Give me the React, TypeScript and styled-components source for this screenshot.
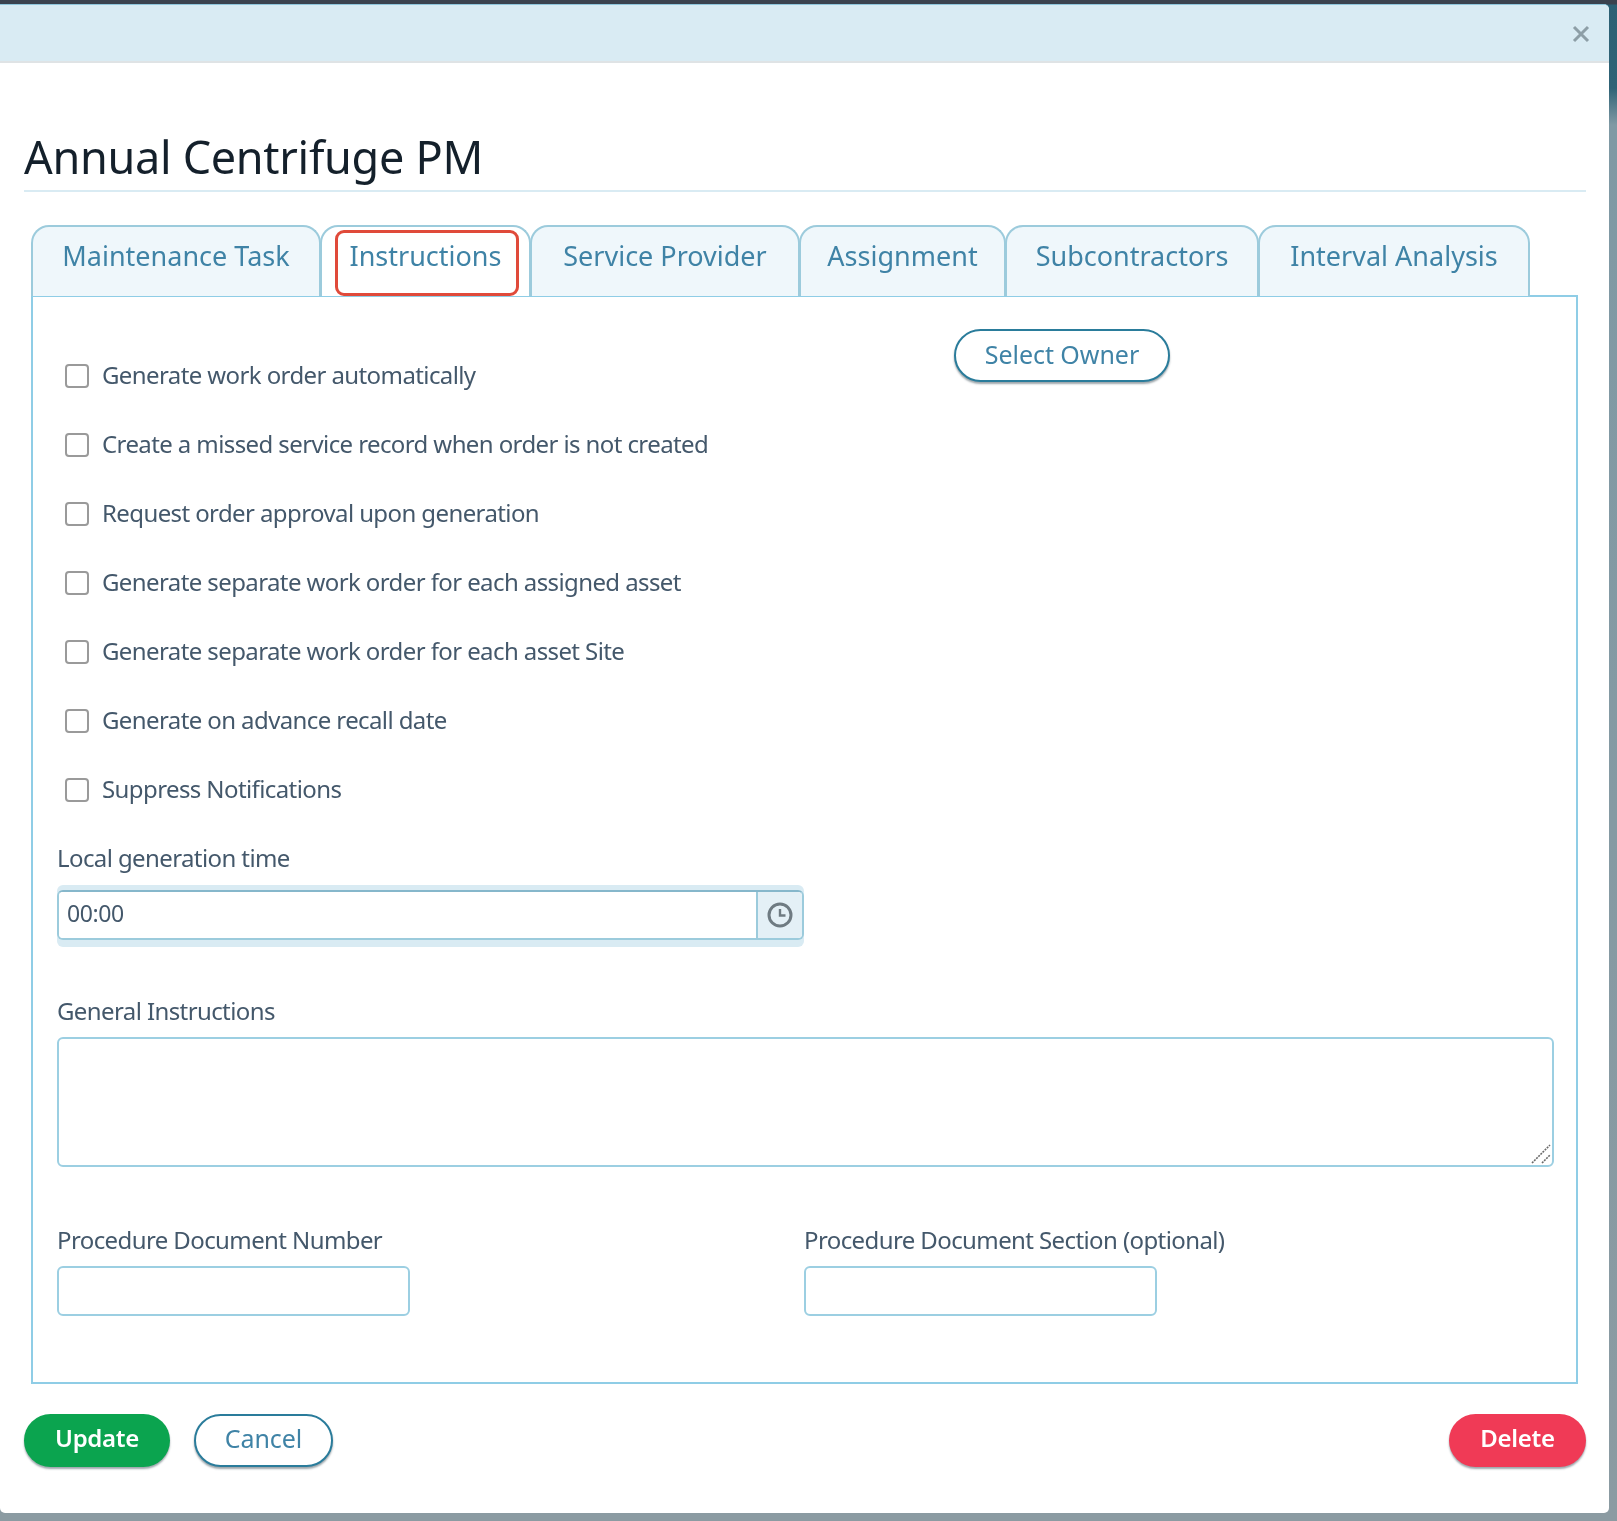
import styled, { createGlobalStyle } from "styled-components";

const GlobalStyle = createGlobalStyle`
  html, body {
    margin: 0;
    padding: 0;
  }
  body {
    width: 1617px;
    height: 1521px;
    overflow: hidden;
    font-family: "Noto Sans", "Open Sans", sans-serif;
    background: linear-gradient(180deg, #3b424e 0, #3b424e 4px, #2c6074 5px, #2f6376 88px, #7f99a4 125px, #8b9ba2 100%);
  }
`;

const tabs = [
  { label: "Maintenance Task", width: 290 },
  { label: "Instructions", width: 211, active: true },
  { label: "Service Provider", width: 270 },
  { label: "Assignment", width: 207 },
  { label: "Subcontractors", width: 254 },
  { label: "Interval Analysis", width: 272 },
];

const options = [
  "Generate work order automatically",
  "Create a missed service record when order is not created",
  "Request order approval upon generation",
  "Generate separate work order for each assigned asset",
  "Generate separate work order for each asset Site",
  "Generate on advance recall date",
  "Suppress Notifications",
];

const Modal = styled.div`
  width: 1609px;
  height: 1509px;
  margin-top: 4px;
  background: #fff;
  border-top: 1px solid #8fc6dc;
  border-radius: 0 5px 5px 5px;
  box-sizing: border-box;
  filter: blur(0.4px);
`;

const Header = styled.div`
  height: 58px;
  box-sizing: border-box;
  display: flex;
  align-items: center;
  justify-content: flex-end;
  padding: 2px 19px 0 0;
  background: #d9ebf3;
  border-bottom: 2px solid #dfe3e5;
  border-radius: 0 5px 0 0;
`;

const CloseIcon = styled.svg`
  width: 18px;
  height: 18px;
  stroke: #8d9ea6;
  stroke-width: 3;
  fill: none;
`;

const Body = styled.div`
  padding: 71px 23px 0 24px;
`;

const Title = styled.h1`
  margin: 0;
  height: 56px;
  font-size: 45px;
  line-height: 46px;
  font-weight: 400;
  color: #14202b;
  letter-spacing: -0.3px;
  border-bottom: 2px solid #d9ebf3;
`;

const TabBar = styled.div`
  display: flex;
  margin: 33px 0 0 7px;
  position: relative;
`;

const Tab = styled.div<{ $width: number; $active?: boolean }>`
  width: ${(p) => p.$width}px;
  height: 71px;
  box-sizing: border-box;
  flex: none;
  display: flex;
  justify-content: center;
  padding-top: 11px;
  font-size: 27px;
  line-height: 36px;
  letter-spacing: 0;
  color: #3f83a6;
  background: ${(p) => (p.$active ? "#fff" : "#eff7fb")};
  border: 2px solid #9ccbdc;
  border-bottom: none;
  border-radius: 18px 18px 0 0;
  margin-right: -1px;
`;

const Highlight = styled.div`
  position: absolute;
  left: 304px;
  top: 5px;
  width: 184px;
  height: 66px;
  box-sizing: border-box;
  border: 3px solid #e04a3a;
  border-radius: 9px;
`;

const Panel = styled.div`
  width: 1547px;
  height: 1089px;
  box-sizing: border-box;
  margin-left: 7px;
  margin-top: -1px;
  padding: 32px 0 0 24px;
  border: 2px solid #8fcde6;
  background: #fff;
`;

const TopRow = styled.div`
  display: flex;
`;

const OptionList = styled.div`
  width: 897px;
  flex: none;
  padding-top: 12px;
`;

const OptionRow = styled.label`
  display: flex;
  align-items: center;
  height: 69.15px;
  padding-left: 8px;
  gap: 13px;
  font-size: 24px;
  letter-spacing: -0.6px;
  color: #44586b;
`;

const OptionText = styled.span`
  padding-bottom: 3px;
`;

const Check = styled.input`
  appearance: none;
  margin: 0;
  width: 24px;
  height: 24px;
  flex: none;
  background: #fff;
  border: 2px solid #9a9a9a;
  border-radius: 4px;
`;

const Pill = styled.button<{ $variant: "outline" | "green" | "red" }>`
  height: 53px;
  box-sizing: border-box;
  border-radius: 27px;
  font-family: inherit;
  font-size: ${(p) => (p.$variant === "outline" ? 25 : 24)}px;
  line-height: 30px;
  letter-spacing: ${(p) => (p.$variant === "outline" ? "-0.05px" : "-0.3px")};
  padding: 0 0 6px;
  color: ${(p) => (p.$variant === "outline" ? "#3f83a6" : "#fff")};
  font-weight: ${(p) => (p.$variant === "outline" ? 400 : 600)};
  background: ${(p) =>
    p.$variant === "green" ? "#0ba44f" : p.$variant === "red" ? "#f03a56" : "#fff"};
  border: ${(p) => (p.$variant === "outline" ? "2px solid #2a7c9b" : "none")};
  box-shadow: 0 2px 2px rgba(40, 60, 70, 0.45);
`;

const OwnerButton = styled(Pill)`
  width: 216px;
  padding-bottom: 3px;
`;

const FieldLabel = styled.div<{ $gap: number }>`
  height: 30px;
  margin-top: ${(p) => p.$gap}px;
  font-size: 24px;
  line-height: 30px;
  letter-spacing: -0.6px;
  color: #44586b;
  white-space: nowrap;
`;

const TimeGroup = styled.div`
  width: 747px;
  margin-top: 12px;
  padding: 5px 0 7px;
  background: #d9ebf3;
  border-radius: 6px;
`;

const TimeInner = styled.div`
  display: flex;
  height: 50px;
  box-sizing: border-box;
  border: 2px solid #9ccbdc;
  border-top-color: #86b7cb;
  border-radius: 6px;
  background: #fff;
  overflow: hidden;
`;

const TimeInput = styled.input`
  flex: 1;
  min-width: 0;
  border: none;
  outline: none;
  padding: 0 0 3px 8px;
  font-family: inherit;
  font-size: 23px;
  letter-spacing: -0.4px;
  color: #44586b;
`;

const TimeAddon = styled.div`
  width: 44px;
  flex: none;
  display: flex;
  align-items: center;
  justify-content: center;
  background: #e4f0f6;
  border-left: 2px solid #9ccbdc;
`;

const ClockIcon = styled.svg`
  width: 28px;
  height: 28px;
  fill: none;
  stroke: #6f7b82;
  stroke-width: 3;
`;

const InstructionsWrap = styled.div`
  position: relative;
  width: 1497px;
  margin-top: 11px;
`;

const Instructions = styled.textarea`
  display: block;
  width: 100%;
  height: 130px;
  box-sizing: border-box;
  border: 2px solid #9ccfe2;
  border-radius: 6px;
  outline: none;
  background: #fff;
  resize: none;
`;

const ResizeGrip = styled.svg`
  position: absolute;
  right: 3px;
  bottom: 3px;
  width: 20px;
  height: 20px;
  stroke: #6a6a6a;
  stroke-width: 1.6;
  stroke-dasharray: 2 1;
  fill: none;
`;

const ProcedureRow = styled.div`
  display: grid;
  grid-template-columns: 747px 353px;
`;

const TextField = styled.input`
  display: block;
  width: 353px;
  height: 50px;
  margin-top: 11px;
  box-sizing: border-box;
  border: 2px solid #9ccfe2;
  border-radius: 6px;
  outline: none;
  background: #fff;
`;

const Footer = styled.div`
  display: flex;
  align-items: center;
  margin-top: 30px;
  gap: 24px;
`;

const SaveButton = styled(Pill)`
  width: 146px;
`;

const CancelButton = styled(Pill)`
  width: 139px;
`;

const DeleteButton = styled(Pill)`
  width: 137px;
  margin-left: auto;
`;

export default function App() {
  return (
    <>
      <GlobalStyle />
      <Modal>
        <Header>
          <CloseIcon viewBox="0 0 18 18">
            <path d="M2 2l14 14M16 2L2 16" />
          </CloseIcon>
        </Header>
        <Body>
          <Title>Annual Centrifuge PM</Title>
          <TabBar>
            {tabs.map((t) => (
              <Tab key={t.label} $width={t.width} $active={t.active}>
                {t.label}
              </Tab>
            ))}
            <Highlight />
          </TabBar>
          <Panel>
            <TopRow>
              <OptionList>
                {options.map((o) => (
                  <OptionRow key={o}>
                    <Check type="checkbox" />
                    <OptionText>{o}</OptionText>
                  </OptionRow>
                ))}
              </OptionList>
              <OwnerButton $variant="outline">Select Owner</OwnerButton>
            </TopRow>
            <FieldLabel $gap={18}>Local generation time</FieldLabel>
            <TimeGroup>
              <TimeInner>
                <TimeInput defaultValue="00:00" />
                <TimeAddon>
                  <ClockIcon viewBox="0 0 28 28">
                    <circle cx="14" cy="14" r="11" />
                    <path d="M14 8v6.5h5.5" strokeWidth="2.4" />
                  </ClockIcon>
                </TimeAddon>
              </TimeInner>
            </TimeGroup>
            <FieldLabel $gap={49}>General Instructions</FieldLabel>
            <InstructionsWrap>
              <Instructions />
              <ResizeGrip viewBox="0 0 20 20">
                <path d="M1 19L19 1M11 19l8-8" />
              </ResizeGrip>
            </InstructionsWrap>
            <ProcedureRow>
              <div>
                <FieldLabel $gap={58}>Procedure Document Number</FieldLabel>
                <TextField />
              </div>
              <div>
                <FieldLabel $gap={58}>Procedure Document Section (optional)</FieldLabel>
                <TextField />
              </div>
            </ProcedureRow>
          </Panel>
          <Footer>
            <SaveButton $variant="green">Update</SaveButton>
            <CancelButton $variant="outline">Cancel</CancelButton>
            <DeleteButton $variant="red">Delete</DeleteButton>
          </Footer>
        </Body>
      </Modal>
    </>
  );
}
